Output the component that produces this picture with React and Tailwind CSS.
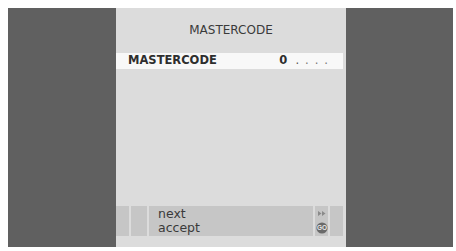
const font = { fontFamily: '"DejaVu Sans", "Liberation Sans", sans-serif' };

function GoIcon() {
  return (
    <svg width="12" height="12" viewBox="0 0 12 12">
      <circle cx="6" cy="6" r="5.6" fill="#6a6a6a" />
      <text x="6" y="8.2" textAnchor="middle" fontSize="6.5" fontWeight="700" fill="#e8e8e8" fontFamily="Liberation Sans, sans-serif">GO</text>
    </svg>
  );
}

function ForwardIcon() {
  return (
    <svg width="8" height="5" viewBox="0 0 8 5">
      <path d="M0 0 L3.5 2.5 L0 5 Z M4 0 L7.5 2.5 L4 5 Z" fill="#8a8a8a" />
    </svg>
  );
}

export default function App() {
  return (
    <div className="w-[456px] h-[251px] bg-white pt-[8px] pl-[8px] pr-[3px] pb-[4px]" style={font}>
      <div className="h-full bg-[#606060] pl-[108px]">
        <div className="w-[230px] h-full bg-[#dcdcdc] flex flex-col">
          <div className="h-[45px] flex items-center justify-center text-[12px] text-[#3a3a3a] pb-[2px]">
            MASTERCODE
          </div>
          <div className="h-[16px] w-[227px] bg-[#f8f8f8] flex items-center justify-between pl-[12px] pr-[15px] text-[11.5px] font-bold text-[#2e2e2e]">
            <span>MASTERCODE</span>
            <span className="flex items-center gap-[6px]">
              <span className="mr-[2px]">0</span>
              <span className="font-normal text-[#555]">.</span>
              <span className="font-normal text-[#777]">.</span>
              <span className="font-normal text-[#777]">.</span>
              <span className="font-normal text-[#777]">.</span>
            </span>
          </div>
          <div className="flex-1" />
          <div className="h-[30px] flex gap-[2px] w-[227px]">
            <div className="w-[13px] bg-[#c6c6c6]" />
            <div className="w-[16px] bg-[#c6c6c6]" />
            <div className="w-[164px] bg-[#c6c6c6] pl-[9px] pt-[1px] text-[12.5px] leading-[14px] text-[#3a3a3a]">
              <div>next</div>
              <div>accept</div>
            </div>
            <div className="w-[13px] bg-[#c6c6c6] flex flex-col items-center pt-[5px] gap-[6px]">
              <ForwardIcon />
              <GoIcon />
            </div>
            <div className="flex-1 bg-[#c6c6c6]" />
          </div>
          <div className="h-[11px]" />
        </div>
      </div>
    </div>
  );
}
